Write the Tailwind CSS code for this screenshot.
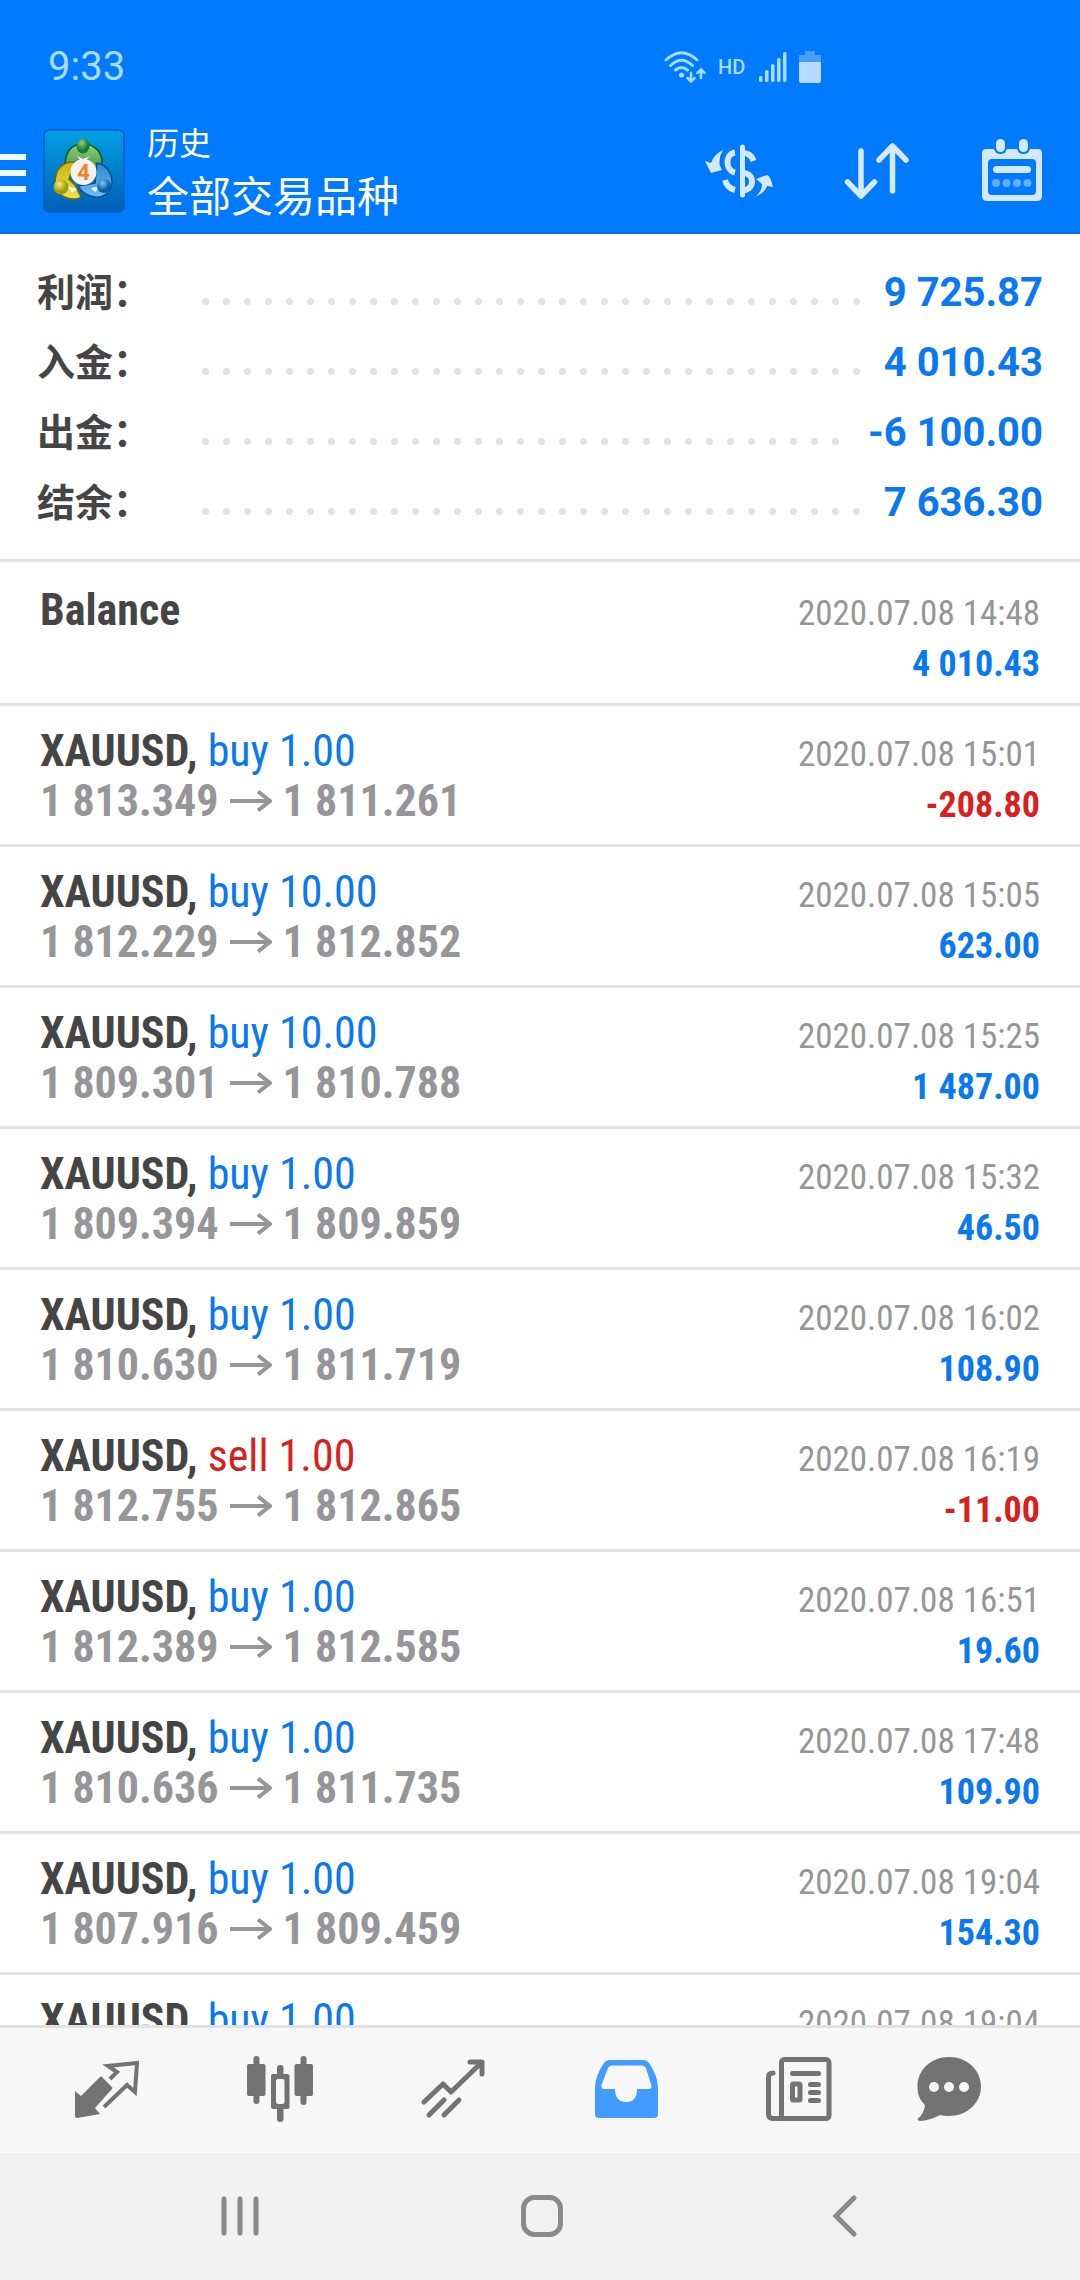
<!DOCTYPE html>
<html lang="zh-CN">
<head>
<meta charset="utf-8">
<meta name="viewport" content="width=device-width, initial-scale=1">
<title>历史</title>
<script src="https://cdn.jsdelivr.net/npm/@tailwindcss/browser@4"></script>
</head>
<body class="bg-white font-['Roboto','Noto_Sans_CJK_SC',sans-serif]">
<svg class="hidden" aria-hidden="true">
  <symbol id="arrow" viewBox="0 0 42 22"><path d="M0 11H40M28 1.500L40 11L28 20.500" fill="none" stroke="#969698" stroke-width="4"/></symbol>
</svg>
<div class="flex h-screen flex-col overflow-hidden">
  <header class="shrink-0 border-b-2 border-[#0a6fd8] bg-[#007aff] text-white">
    <div class="flex h-[108px] items-center pt-[26px] pl-12 text-[#a6dcff]">
      <time class="w-[616px] text-[40px]/[48px]">9:33</time>
      <svg class="h-8 w-[42px]" viewBox="0 0 42 32" fill="none" stroke="#a6dcff" stroke-width="3" stroke-linecap="round"><path d="M2 9Q17.500-5.500 33 9M6.500 14.500Q17.500 4 28.500 14.500M11.500 19Q17.500 14 23.500 19"/><circle cx="17.500" cy="24" r="2.500" fill="#a6dcff" stroke="none"/><path stroke-width="2.500" d="M27 22V30M23.500 27L27 30.500L30.500 27M37 27V19M33.500 22L37 18.500L40.500 22"/></svg>
      <span class="ml-3 text-xl/6 font-medium">HD</span>
      <svg class="ml-[14px] h-8 w-7" viewBox="0 0 28 32" fill="#a6dcff"><rect x="0" y="25" width="3.500" height="6" rx="1.500"/><rect x="6" y="19" width="3.500" height="12" rx="1.500"/><rect x="12" y="13" width="3.500" height="18" rx="1.500"/><rect x="18" y="7" width="3.500" height="24" rx="1.500"/><rect x="24" y="1" width="3.500" height="30" rx="1.500"/></svg>
      <svg class="ml-3 h-8 w-[22px]" viewBox="0 0 22 32"><path d="M6 0H16V4H22V12H0V4H6Z" fill="#479fff"/><path d="M0 11H22V30Q22 32 20 32H2Q0 32 0 30Z" fill="#b8dbff"/></svg>
    </div>
    <div class="flex h-[124px] items-center pt-[2px] pr-[37px]">
      <button aria-label="Menu" class="flex w-[26px] flex-col gap-[10px] pt-1"><span class="h-[6px] w-full bg-[#f0faff]"></span><span class="h-[6px] w-full bg-[#f0faff]"></span><span class="h-[6px] w-full bg-[#f0faff]"></span></button>
      <svg class="ml-[17px] h-[84px] w-[82px]" viewBox="0 0 82 84">
        <defs>
          <linearGradient id="bg" x1="0" y1="0" x2="0" y2="1"><stop offset="0" stop-color="#00a0e4"/><stop offset="1" stop-color="#005fb6"/></linearGradient>
          <radialGradient id="gg" cx=".4" cy=".3"><stop offset="0" stop-color="#8fd08a"/><stop offset="1" stop-color="#1d7a2c"/></radialGradient>
          <radialGradient id="gy" cx=".4" cy=".3"><stop offset="0" stop-color="#f5ee7a"/><stop offset="1" stop-color="#a39a10"/></radialGradient>
          <radialGradient id="gb" cx=".4" cy=".3"><stop offset="0" stop-color="#7ccaf5"/><stop offset="1" stop-color="#0a5ea8"/></radialGradient>
          <linearGradient id="rg" x1="0" y1="0" x2="0" y2="1"><stop offset="0" stop-color="#8fcf7c"/><stop offset="1" stop-color="#257f33"/></linearGradient>
          <linearGradient id="ry" x1="0" y1="0" x2="0" y2="1"><stop offset="0" stop-color="#c9b512"/><stop offset="1" stop-color="#efe04a"/></linearGradient>
          <linearGradient id="rb" x1="0" y1="0" x2="0" y2="1"><stop offset="0" stop-color="#2b86cf"/><stop offset="1" stop-color="#6cc0f4"/></linearGradient>
        </defs>
        <rect x="1" y="1" width="80" height="82" rx="5" fill="url(#bg)" stroke="#0063cc" stroke-width="2"/>
        <path d="M22 38C22 22 29 15 40 15C52 15 59 23 59 34C59 42 56 48 50 52L30 36Q26 36 22 38Z" fill="url(#rg)" stroke="#145a20" stroke-width="1.500"/>
        <path d="M32 33C18 32 12 42 12 54C13 64 21 70 31 70Q35 70 38 68L32 56L26 50Z" fill="url(#ry)" stroke="#6e6a10" stroke-width="1.500"/>
        <path d="M54 34C64 36 69 44 69 54C68 64 60 69 52 68C43 67 38 62 35 57L52 54Z" fill="url(#rb)" stroke="#0b4f93" stroke-width="1.500"/>
        <path d="M24 57L34 60L29 64ZM48 59L58 57L52 63ZM34 27L40 30L47 27L43 31H37Z" fill="#f6f6ea"/>
        <ellipse cx="40" cy="17" rx="6.500" ry="7.500" fill="url(#gg)"/><circle cx="18" cy="58" r="7.500" fill="url(#gy)"/><circle cx="61" cy="57" r="7" fill="url(#gb)"/>
        <circle cx="40.500" cy="43" r="13" fill="#f4f2f0"/>
        <text x="40.500" y="51" text-anchor="middle" font-family="Roboto" font-weight="700" font-size="22" fill="#f08228">4</text>
      </svg>
      <h1 class="ml-[22px] flex-1 font-normal"><span class="block text-[32px]/[54px]">历史</span><span class="block text-[42px]/[54px]">全部交易品种</span></h1>
      <button aria-label="Currency"><svg class="h-16 w-[70px]" viewBox="0 0 70 64" fill="none" stroke="#d4e9ff"><path d="M37.500 8V56" stroke-width="5" stroke-linecap="round"/><path d="M30 13.500C20 15 20 31 30 33.500M20 41Q22 49 30 51M38 14Q46 14 48.500 22M38 34C50 34 50 51 38 51" stroke-width="6"/><path d="M18 11Q9 15 6 24L0 22L6 34L17 31L15 27Q13 19 18 11ZM50 58Q57 53 57 45L51 40L62 36Q65 36 68 48L62 47Q60 54 50 58Z" fill="#d4e9ff" stroke="none"/></svg></button>
      <button aria-label="Sort" class="ml-[69px]"><svg class="h-16 w-[66px]" viewBox="0 0 66 64" fill="none" stroke="#d4e9ff" stroke-width="5.500" stroke-linecap="round" stroke-linejoin="round"><path d="M17 12V56M3.500 43L17 57L30.500 43M48.500 52V8M35 21L48.500 7L62 21"/></svg></button>
      <button aria-label="Date range" class="ml-[71px]"><svg class="h-16 w-[62px]" viewBox="0 0 62 64"><path fill="#d4e9ff" fill-rule="evenodd" d="M5 10H57Q61 10 61 14V57Q61 62 56 62H6Q1 62 1 57V14Q1 10 5 10ZM11 20Q7 20 7 24V52Q7 56 11 56H51Q55 56 55 52V24Q55 20 51 20Z"/><rect x="13" y="0" width="13" height="15" rx="6" fill="#007aff"/><rect x="36" y="0" width="13" height="15" rx="6" fill="#007aff"/><rect x="15" y="0" width="9" height="13" rx="4.500" fill="#d4e9ff"/><rect x="38" y="0" width="9" height="13" rx="4.500" fill="#d4e9ff"/><rect x="12" y="27" width="38" height="7" rx="3.500" fill="#d4e9ff"/><g fill="#62aeff"><circle cx="15" cy="44" r="4"/><circle cx="25.500" cy="44" r="4"/><circle cx="36" cy="44" r="4"/><circle cx="46.500" cy="44" r="4"/></g></svg></button>
    </div>
  </header>
  <main class="min-h-0 flex-1 overflow-hidden">
    <dl class="border-b-3 border-[#e2e2e2] px-[37px] pt-6 pb-[21px] text-[#454545]">
      <div class="flex h-[70px] items-center"><dt class="w-[158px] text-[38px]/[70px] font-bold">利润：</dt><dd class="flex flex-1 items-center"><span class="mt-4 mr-[18px] h-[7px] flex-1 bg-[radial-gradient(circle_at_center,#e2e2e2_3px,transparent_4px)] bg-[length:21px_7px] bg-repeat-x"></span><span class="text-[40px]/[70px] font-bold text-[#0a78ee]">9 725.87</span></dd></div>
      <div class="flex h-[70px] items-center"><dt class="w-[158px] text-[38px]/[70px] font-bold">入金：</dt><dd class="flex flex-1 items-center"><span class="mt-4 mr-[18px] h-[7px] flex-1 bg-[radial-gradient(circle_at_center,#e2e2e2_3px,transparent_4px)] bg-[length:21px_7px] bg-repeat-x"></span><span class="text-[40px]/[70px] font-bold text-[#0a78ee]">4 010.43</span></dd></div>
      <div class="flex h-[70px] items-center"><dt class="w-[158px] text-[38px]/[70px] font-bold">出金：</dt><dd class="flex flex-1 items-center"><span class="mt-4 mr-[18px] h-[7px] flex-1 bg-[radial-gradient(circle_at_center,#e2e2e2_3px,transparent_4px)] bg-[length:21px_7px] bg-repeat-x"></span><span class="text-[40px]/[70px] font-bold text-[#0a78ee]">-6 100.00</span></dd></div>
      <div class="flex h-[70px] items-center"><dt class="w-[158px] text-[38px]/[70px] font-bold">结余：</dt><dd class="flex flex-1 items-center"><span class="mt-4 mr-[18px] h-[7px] flex-1 bg-[radial-gradient(circle_at_center,#e2e2e2_3px,transparent_4px)] bg-[length:21px_7px] bg-repeat-x"></span><span class="text-[40px]/[70px] font-bold text-[#0a78ee]">7 636.30</span></dd></div>
    </dl>
    <ul id="deals" class="pt-[3px] font-['Roboto_Condensed','Liberation_Sans_Narrow',Roboto,sans-serif]"></ul>
  </main>
  <nav class="grid h-32 shrink-0 grid-cols-[173fr_173fr_173fr_173fr_173fr_128fr] border-t-3 border-[#e2e2e2] bg-[#f7f7f7] pr-[67px] pb-1 pl-5">
    <a href="#quotes" aria-label="Quotes" class="flex items-center justify-center"><svg class="h-[66px] w-[66px]" viewBox="0 0 66 66"><path d="M1 35L7 40L26 21Q27 20 28 21L38 31Q39 32 38 33L21 52L26 58L3 62Q1 62 1 60Z" fill="#737373"/><path d="M36 23L43 16L34 10L63 7L61 36L53 29L30 51" fill="none" stroke="#737373" stroke-width="4"/></svg></a>
    <a href="#charts" aria-label="Charts" class="flex items-center justify-center"><svg class="h-[66px] w-[66px]" viewBox="0 0 66 66" fill="#737373"><rect x="0" y="8" width="18.500" height="32" rx="2"/><rect x="6.500" y="0" width="6" height="48" rx="3"/><rect x="47.500" y="8" width="18.500" height="32" rx="2"/><rect x="53.500" y="0" width="6" height="49" rx="3"/><rect x="30" y="9" width="6.500" height="57" rx="3"/><rect x="24" y="18" width="18.500" height="35" rx="2"/><rect x="29" y="23" width="8.500" height="25" rx="2" fill="#f7f7f7"/></svg></a>
    <a href="#trade" aria-label="Trade" class="flex items-center justify-center"><svg class="h-[66px] w-[66px]" viewBox="0 0 66 66" fill="none" stroke="#737373" stroke-width="5" stroke-linecap="round" stroke-linejoin="round"><path d="M4 46L23 28L31 36L61 7M50 6H62V18M9 59L24 44M24 59L39 44"/></svg></a>
    <a href="#history" aria-label="历史" aria-current="page" class="flex items-center justify-center"><svg class="h-[66px] w-[66px]" viewBox="0 0 66 66"><path fill="#429cff" fill-rule="evenodd" d="M16 4H51Q54 4 56 7Q65 20 65 32V58Q65 62 61 62H6Q2 62 2 58V32Q2 20 11 7Q13 4 16 4ZM19 9.500Q16 9.500 15 12L8.500 29Q8 33 11 33H22Q22 46 33.500 46Q44 46 44 33H56Q59 33 58.500 30L53 12Q52 9.500 49 9.500Z"/></svg></a>
    <a href="#news" aria-label="News" class="flex items-center justify-center"><svg class="h-[66px] w-[66px]" viewBox="0 0 66 66" fill="none" stroke="#737373" stroke-width="5" stroke-linecap="round"><rect x="15.500" y="3.500" width="47.500" height="59" rx="3"/><path d="M7 17Q2.500 17 2.500 21V58Q2.500 62.500 7 62.500H16"/><path d="M26.500 17.500H52.500M44.500 28.500H52.500M44.500 36.500H52.500M44.500 44.500H52.500"/><rect x="26.500" y="28" width="7.500" height="16" rx="1"/></svg></a>
    <a href="#messages" aria-label="Messages" class="flex items-center justify-center"><svg class="h-[66px] w-[66px]" viewBox="0 0 66 66"><path d="M33 1C15 1 1.500 14 1.500 30C1.500 39 4 44 9 49Q8 58 1.500 63Q2 65 5 65Q15 64 24 59Q28 60 33 60C51 60 65 47 65 30.500C65 14 51 1 33 1Z" fill="#737373"/><circle cx="18" cy="31" r="5" fill="#f7f7f7"/><circle cx="33" cy="31" r="5" fill="#f7f7f7"/><circle cx="48" cy="31" r="5" fill="#f7f7f7"/></svg></a>
  </nav>
  <div class="grid h-[127px] shrink-0 grid-cols-3 bg-[#f1f1f1] pr-[85px] pb-[2px] pl-[89px]">
    <button aria-label="Recents" class="flex items-center justify-center"><svg class="h-11 w-11" viewBox="0 0 44 44" fill="none" stroke="#8a8a8a" stroke-width="5" stroke-linecap="round"><path d="M6 5V39M22 5V39M38 5V39"/></svg></button>
    <button aria-label="Home" class="flex items-center justify-center"><svg class="h-11 w-11" viewBox="0 0 44 44" fill="none" stroke="#8a8a8a" stroke-width="5"><rect x="3.500" y="3.500" width="37" height="37" rx="11"/></svg></button>
    <button aria-label="Back" class="flex items-center justify-center"><svg class="h-11 w-11" viewBox="0 0 44 44" fill="none" stroke="#8a8a8a" stroke-width="5" stroke-linecap="round"><path d="M32 4L14 22L32 40"/></svg></button>
  </div>
</div>
<script>
const deals = [
  ["Balance", "", "", "", "2020.07.08 14:48", "4 010.43"],
  ["XAUUSD", "buy 1.00", "1 813.349", "1 811.261", "2020.07.08 15:01", "-208.80"],
  ["XAUUSD", "buy 10.00", "1 812.229", "1 812.852", "2020.07.08 15:05", "623.00"],
  ["XAUUSD", "buy 10.00", "1 809.301", "1 810.788", "2020.07.08 15:25", "1 487.00"],
  ["XAUUSD", "buy 1.00", "1 809.394", "1 809.859", "2020.07.08 15:32", "46.50"],
  ["XAUUSD", "buy 1.00", "1 810.630", "1 811.719", "2020.07.08 16:02", "108.90"],
  ["XAUUSD", "sell 1.00", "1 812.755", "1 812.865", "2020.07.08 16:19", "-11.00"],
  ["XAUUSD", "buy 1.00", "1 812.389", "1 812.585", "2020.07.08 16:51", "19.60"],
  ["XAUUSD", "buy 1.00", "1 810.636", "1 811.735", "2020.07.08 17:48", "109.90"],
  ["XAUUSD", "buy 1.00", "1 807.916", "1 809.459", "2020.07.08 19:04", "154.30"],
  ["XAUUSD", "buy 1.00", "", "", "2020.07.08 19:04", ""],
];
document.getElementById("deals").innerHTML = deals.map(([name, side, open, close, time, profit]) => `
  <li class="flex h-[141px] items-baseline justify-between border-b-3 border-[#e2e2e2] px-10 pt-5">
    <div class="text-[44px]/[50px]">
      <p><b class="font-bold text-[#454545]">${name}${side ? "," : ""}</b> <span class="${side.startsWith("sell") ? "text-[#d9201c]" : "text-[#0a78ee]"}">${side}</span></p>
      ${open ? `<p class="flex items-center font-bold text-[#969698]">${open}<svg class="mx-[11px] h-[22px] w-[42px]"><use href="#arrow"/></svg>${close}</p>` : ""}
    </div>
    <div class="text-right">
      <p class="text-[35px]/[50px] text-[#969696]">${time}</p>
      <p class="text-[36px]/[50px] font-bold ${profit.startsWith("-") ? "text-[#d9201c]" : "text-[#0a78ee]"}">${profit}</p>
    </div>
  </li>`).join("");
</script>
</body>
</html>
